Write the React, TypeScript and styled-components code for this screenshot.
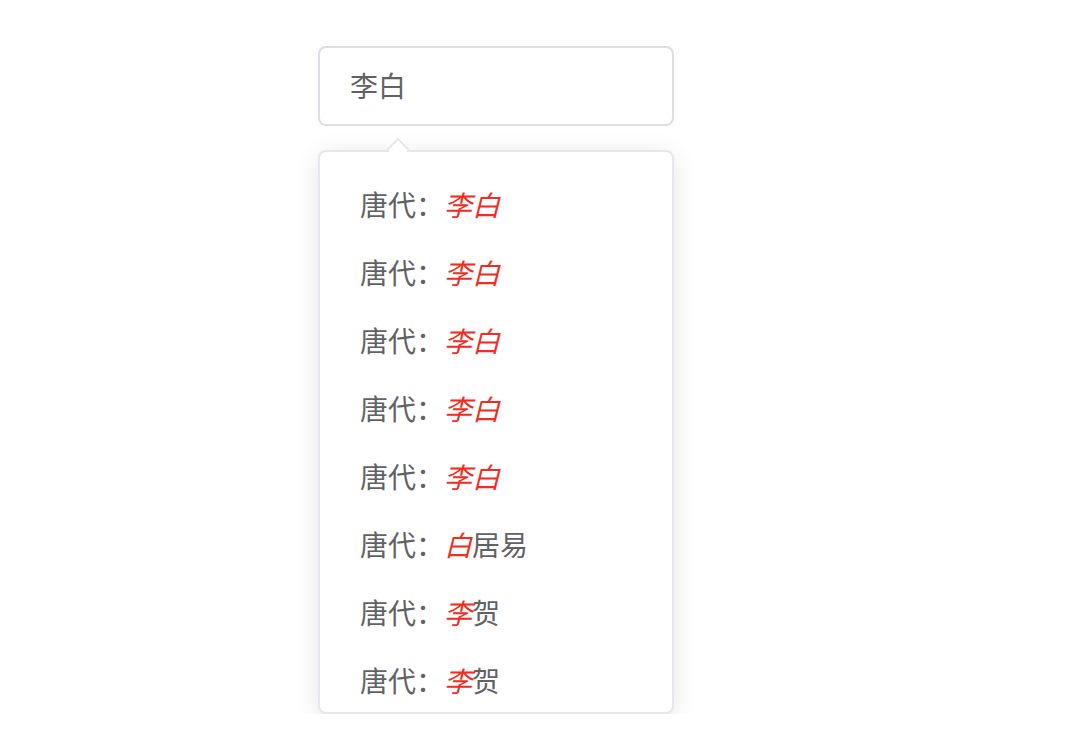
import React, { useState } from "react";
import styled, { createGlobalStyle } from "styled-components";

interface I_Poet {
  id: number;
  dynasty: string;
  name: string;
}

const poets: I_Poet[] = [
  { id: 1, dynasty: "唐代", name: "李白" },
  { id: 2, dynasty: "唐代", name: "李白" },
  { id: 3, dynasty: "唐代", name: "李白" },
  { id: 4, dynasty: "唐代", name: "李白" },
  { id: 5, dynasty: "唐代", name: "李白" },
  { id: 6, dynasty: "唐代", name: "白居易" },
  { id: 7, dynasty: "唐代", name: "李贺" },
  { id: 8, dynasty: "唐代", name: "李贺" },
];

// подсвечиваем символы, которые есть в запросе
const highlight = (text: string, query: string) =>
  text.split("").map((ch, i) =>
    query.includes(ch) ? <Mark key={i}>{ch}</Mark> : <span key={i}>{ch}</span>
  );

const App: React.FC = () => {
  const [value, setValue] = useState("李白");

  return (
    <>
      <GlobalStyle />
      <Page>
        <Autocomplete>
          <Input value={value} onChange={(e) => setValue(e.target.value)} />
          <Dropdown>
            <Arrow />
            <List>
              {poets.map((p) => (
                <Item key={p.id}>
                  {p.dynasty}：{highlight(p.name, value)}
                </Item>
              ))}
            </List>
          </Dropdown>
        </Autocomplete>
      </Page>
    </>
  );
};

export default App;

const GlobalStyle = createGlobalStyle`
  body {
    margin: 0;
    background: #fff;
    font-family: "Noto Sans CJK SC", "Liberation Sans", sans-serif;
  }
`;

const Page = styled.div`
  padding: 46px 0 0 318px;
`;

const Autocomplete = styled.div`
  width: 356px;
  display: flex;
  flex-direction: column;
`;

const Input = styled.input`
  box-sizing: border-box;
  width: 100%;
  height: 80px;
  padding: 0 30px 2px;
  border: 2px solid #dcdfe6;
  border-radius: 8px;
  outline: none;
  font-family: inherit;
  font-size: 28px;
  color: #606266;
`;

const Dropdown = styled.div`
  position: relative;
  box-sizing: border-box;
  margin-top: 24px;
  border: 2px solid #e4e7ed;
  border-radius: 8px;
  background: #fff;
  box-shadow: 0 4px 24px rgba(0, 0, 0, 0.1);
`;

const Arrow = styled.div`
  position: absolute;
  top: -11px;
  left: 70px;
  width: 14px;
  height: 14px;
  background: #fff;
  border-top: 2px solid #e4e7ed;
  border-left: 2px solid #e4e7ed;
  transform: rotate(45deg);
`;

const List = styled.ul`
  box-sizing: border-box;
  list-style: none;
  margin: 0;
  padding: 18px 0 0;
  height: 560px;
  overflow: hidden;
  border-radius: 8px;
`;

const Item = styled.li`
  padding: 0 40px;
  line-height: 68px;
  font-size: 28px;
  color: #606266;
  white-space: nowrap;
`;

const Mark = styled.em`
  color: #f02d1f;
  font-style: italic;
`;
